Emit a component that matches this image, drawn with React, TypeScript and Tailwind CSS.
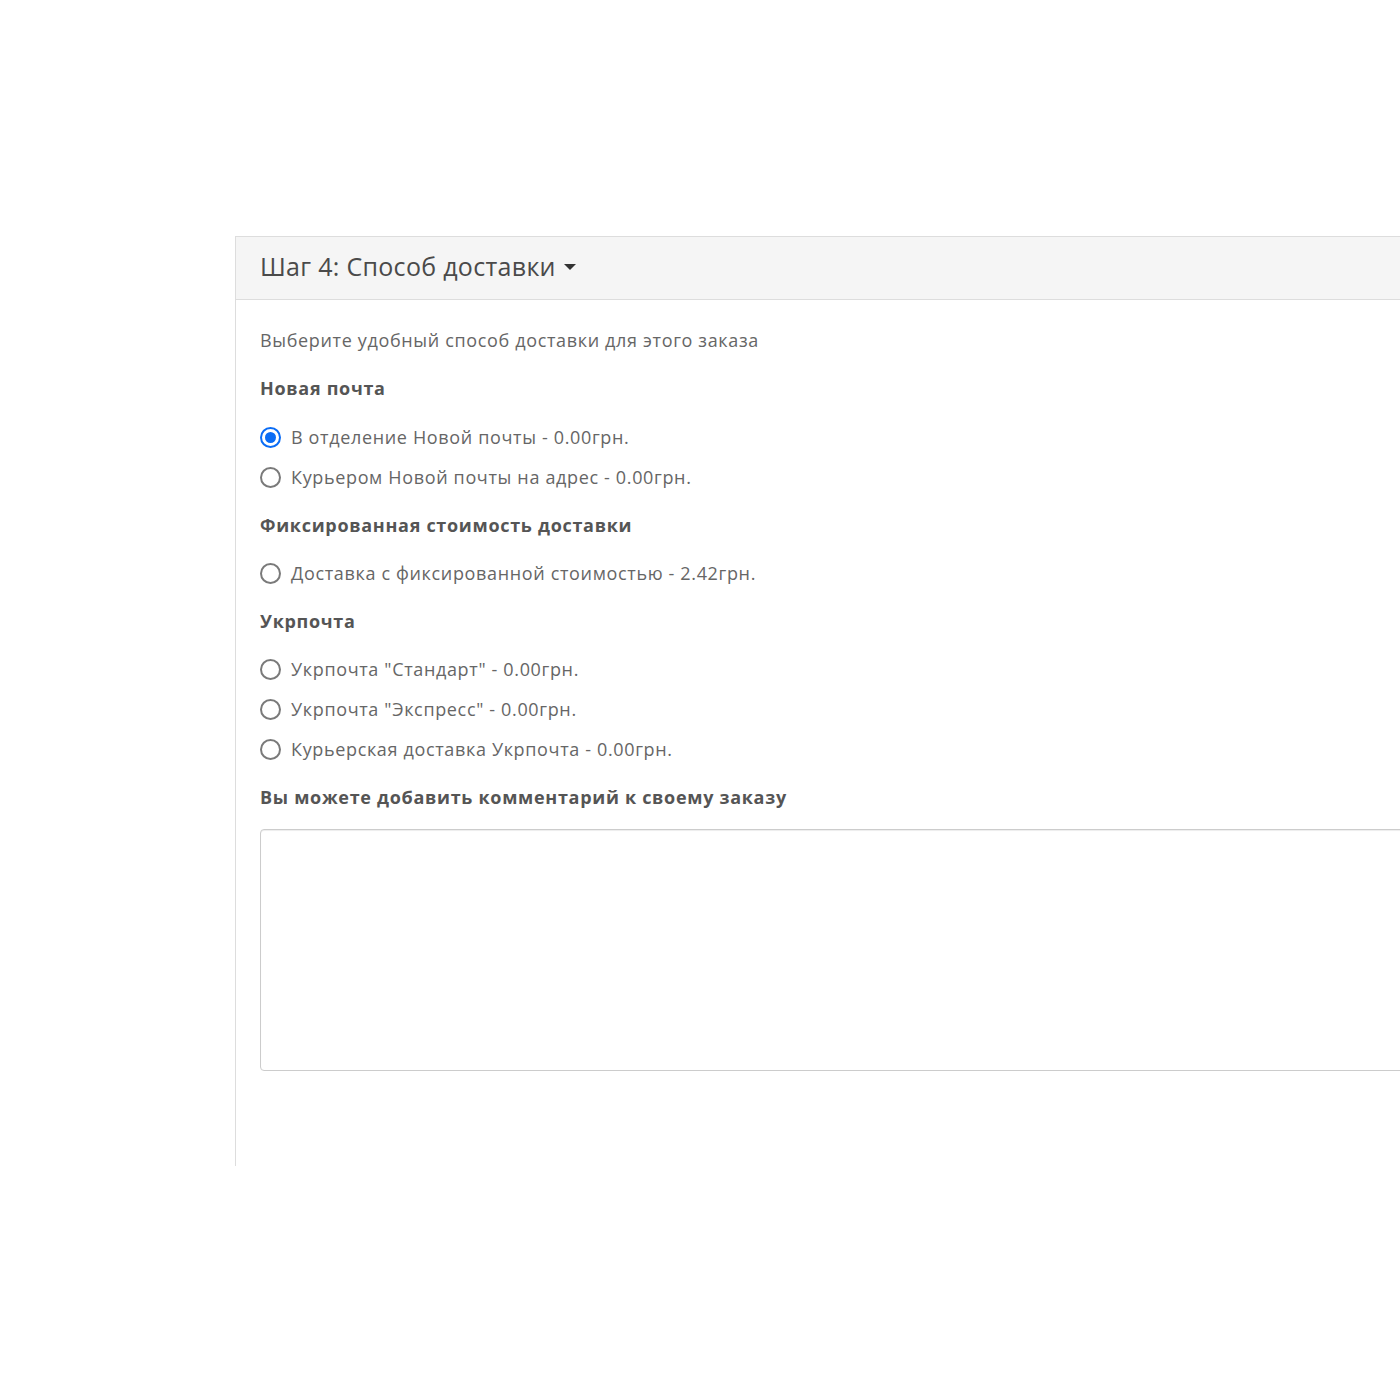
import React, { useState } from "react";

interface Method {
  id: string;
  label: string;
}

interface Group {
  title: string;
  methods: Method[];
}

const groups: Group[] = [
  {
    title: "Новая почта",
    methods: [
      { id: "np.warehouse", label: "В отделение Новой почты - 0.00грн." },
      { id: "np.courier", label: "Курьером Новой почты на адрес - 0.00грн." },
    ],
  },
  {
    title: "Фиксированная стоимость доставки",
    methods: [{ id: "flat", label: "Доставка с фиксированной стоимостью - 2.42грн." }],
  },
  {
    title: "Укрпочта",
    methods: [
      { id: "up.standard", label: 'Укрпочта "Стандарт" - 0.00грн.' },
      { id: "up.express", label: 'Укрпочта "Экспресс" - 0.00грн.' },
      { id: "up.courier", label: "Курьерская доставка Укрпочта - 0.00грн." },
    ],
  },
];

function Radio({ checked }: { checked: boolean }) {
  return (
    <span
      className={
        checked
          ? "flex h-[21px] w-[21px] shrink-0 items-center justify-center rounded-full border-2 border-[#0a6cf5] bg-white"
          : "flex h-[21px] w-[21px] shrink-0 items-center justify-center rounded-full border-2 border-[#7a7a7a] bg-white"
      }
    >
      {checked && <span className="h-[11px] w-[11px] rounded-full bg-[#0a6cf5]"></span>}
    </span>
  );
}

export default function App() {
  const [selected, setSelected] = useState("np.warehouse");

  return (
    <div
      className="h-[1400px] w-[1400px] overflow-hidden bg-white pt-[236px] pl-[235px] text-[#666]"
      style={{ fontFamily: '"Open Sans", "Noto Sans", sans-serif' }}
    >
      <div className="h-[930px] w-[1300px] border-t border-l border-[#ddd]">
        <div className="flex h-[63px] items-center border-b border-[#ddd] bg-[#f5f5f5] pl-[24px]">
          <h4 className="mb-[4px] flex items-center text-[25px] leading-none tracking-[0.3px] text-[#4a4a4a]">
            Шаг 4: Способ доставки
            <span className="ml-[8px] mt-[2px] h-0 w-0 border-x-[6px] border-t-[6px] border-x-transparent border-t-[#333]"></span>
          </h4>
        </div>

        <div className="pl-[24px] pt-[28px] text-[18px] leading-[24px] tracking-[0.65px]">
          <p>Выберите удобный способ доставки для этого заказа</p>

          {groups.map((g, i) => (
            <div key={g.title} className="mt-[24px]">
              <p className="font-bold tracking-[0.7px] text-[#555]">{g.title}</p>
              <div className={i === 0 ? "mt-[25px] flex flex-col gap-[16px]" : "mt-[24px] flex flex-col gap-[16px]"}>
                {g.methods.map((m) => (
                  <label
                    key={m.id}
                    className="flex cursor-pointer items-center gap-[10px]"
                    onClick={() => setSelected(m.id)}
                  >
                    <Radio checked={selected === m.id} />
                    <span>{m.label}</span>
                  </label>
                ))}
              </div>
            </div>
          ))}

          <p className="mt-[24px] font-bold tracking-[0.7px] text-[#555]">
            Вы можете добавить комментарий к своему заказу
          </p>
          <textarea className="mt-[20px] block h-[242px] w-[1260px] resize-none rounded-[4px] border border-[#ccc] shadow-[inset_0_1px_1px_rgba(0,0,0,0.075)] outline-none"></textarea>
        </div>
      </div>
    </div>
  );
}
